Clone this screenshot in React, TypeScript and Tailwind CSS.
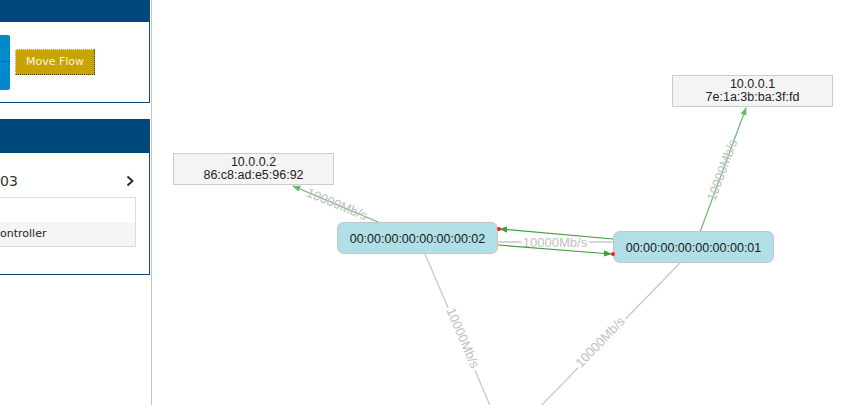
import React from "react";

const GRAY = "#c8c8c8";
const GREEN = "#3fa03f";

function EdgeLabel({ x, y, angle, halo }: { x: number; y: number; angle: number; halo?: boolean }) {
  return (
    <text
      x={x}
      y={y}
      transform={`rotate(${angle} ${x} ${y})`}
      textAnchor="middle"
      dominantBaseline="central"
      fontSize={13}
      fill="#c0c0c0"
      stroke={halo ? "#ffffff" : "none"}
      strokeWidth={halo ? 5 : 0}
      paintOrder="stroke"
      style={{ fontFamily: '"Liberation Sans", Arial, sans-serif' }}
    >
      10000Mb/s
    </text>
  );
}

function Graph() {
  const font = { fontFamily: '"Liberation Sans", Arial, sans-serif' };
  return (
    <svg className="absolute inset-0" width={714} height={405} viewBox="152 0 714 405">
      <defs>
        <marker id="ah" viewBox="0 0 10 10" refX="9" refY="5" markerWidth="8" markerHeight="8" orient="auto-start-reverse" markerUnits="userSpaceOnUse">
          <path d="M0,1 L10,5 L0,9 z" fill={GREEN} />
        </marker>
        <marker id="ah2" viewBox="0 0 10 10" refX="9" refY="5" markerWidth="8" markerHeight="8" orient="auto-start-reverse" markerUnits="userSpaceOnUse">
          <path d="M0,1 L10,5 L0,9 z" fill="#6cb86c" />
        </marker>
      </defs>

      {/* gray links */}
      <line x1={425} y1={254} x2={492} y2={410} stroke={GRAY} strokeWidth={1.3} />
      <line x1={680} y1={263} x2={537} y2={410} stroke={GRAY} strokeWidth={1.3} />
      <line x1={497} y1={242} x2={613} y2={242} stroke={GRAY} strokeWidth={1.3} />
      <EdgeLabel x={463} y={338} angle={66.7} halo />
      <EdgeLabel x={600} y={342} angle={-46} halo />
      <EdgeLabel x={555} y={242} angle={0} halo />

      {/* green links to hosts */}
      <line x1={378} y1={222} x2={293} y2={186} stroke="#6cb86c" strokeWidth={1.2} markerEnd="url(#ah2)" />
      <line x1={700} y1={232} x2={746} y2={108} stroke="#6cb86c" strokeWidth={1.2} markerEnd="url(#ah2)" />
      <EdgeLabel x={337} y={204} angle={22.4} />
      <EdgeLabel x={722} y={170} angle={-69.5} />

      {/* green switch-switch flows */}
      <line x1={613} y1={239} x2={500} y2={229} stroke={GREEN} strokeWidth={1.2} markerEnd="url(#ah)" />
      <line x1={498} y1={245} x2={611} y2={254} stroke={GREEN} strokeWidth={1.2} markerEnd="url(#ah)" />

      {/* hosts */}
      <rect x={173.5} y={153.5} width={160} height={31} fill="#f4f4f4" stroke="#cccccc" />
      <text x={253.5} y={166} textAnchor="middle" fontSize={12.5} fill="#222" style={font}>10.0.0.2</text>
      <text x={253.5} y={179} textAnchor="middle" fontSize={12.5} fill="#222" style={font}>86:c8:ad:e5:96:92</text>

      <rect x={672.5} y={75.5} width={160} height={31} fill="#f4f4f4" stroke="#cccccc" />
      <text x={752.5} y={88} textAnchor="middle" fontSize={12.5} fill="#222" style={font}>10.0.0.1</text>
      <text x={752.5} y={101} textAnchor="middle" fontSize={12.5} fill="#222" style={font}>7e:1a:3b:ba:3f:fd</text>

      {/* switches */}
      <rect x={337.5} y={222.5} width={160} height={31} rx={6} fill="#b0dfe5" stroke="#c6c6c6" />
      <text x={417.5} y={242.5} textAnchor="middle" fontSize={12.5} fill="#1a1a1a" style={font}>00:00:00:00:00:00:00:02</text>

      <rect x={613.5} y={231.5} width={160} height={31} rx={6} fill="#b0dfe5" stroke="#c6c6c6" />
      <text x={693.5} y={251.5} textAnchor="middle" fontSize={12.5} fill="#1a1a1a" style={font}>00:00:00:00:00:00:00:01</text>

      {/* red endpoints */}
      <circle cx={499} cy={229} r={2} fill="#ff1a1a" />
      <circle cx={613} cy={254} r={2} fill="#ff1a1a" />
    </svg>
  );
}

export default function App() {
  return (
    <div
      className="flex h-[405px] w-[866px] overflow-hidden bg-white"
      style={{ fontFamily: '"DejaVu Sans", Verdana, sans-serif' }}
    >
      <div className="flex w-[152px] shrink-0 flex-col border-r border-[#c4c4c4]">
        {/* panel 1 */}
        <div className="w-[150px] border-r border-b border-[#0b4a7a]">
          <div className="h-[22px] bg-[#00477a]" />
          <div className="flex h-[80px] items-center gap-[5px]">
            <div className="flex h-[55px] w-[10px] flex-col overflow-hidden rounded-r-[2px]">
              <div className="h-[27px] border-b border-[#0a6fa8] bg-[#0089cf]" />
              <div className="flex-1 bg-[#0089cf]" />
            </div>
            <button className="flex h-[26px] w-[80px] items-center justify-center border border-dotted border-t-[#f4f0e0] border-l-[#f4f0e0] border-r-[#4a3e00] border-b-[#4a3e00] bg-[#c9a300] text-[11px] font-normal text-[#f8f4e8]">
              Move Flow
            </button>
          </div>
        </div>
        {/* panel 2 */}
        <div className="mt-[16px] w-[150px] border-r border-b border-[#0b4a7a]">
          <div className="h-[34px] bg-[#00477a]" />
          <div className="flex h-[121px] flex-col">
            <div className="mt-[17px] flex h-[22px] items-center justify-between pr-[14px]">
              <span className="text-[14px] text-[#333]">03</span>
              <svg width="10" height="12" viewBox="0 0 10 12" fill="none">
                <path d="M2.5 1.5 L7.5 6 L2.5 10.5" stroke="#222" strokeWidth="1.8" />
              </svg>
            </div>
            <div className="mt-[5px] mr-[13px] flex h-[50px] flex-col border-y border-r border-[#dddddd]">
              <div className="h-[24px] bg-white" />
              <div className="flex flex-1 items-center bg-[#f5f5f5] text-[11px] text-[#222]">ontroller</div>
            </div>
          </div>
        </div>
      </div>
      <div className="relative flex-1">
        <Graph />
      </div>
    </div>
  );
}
